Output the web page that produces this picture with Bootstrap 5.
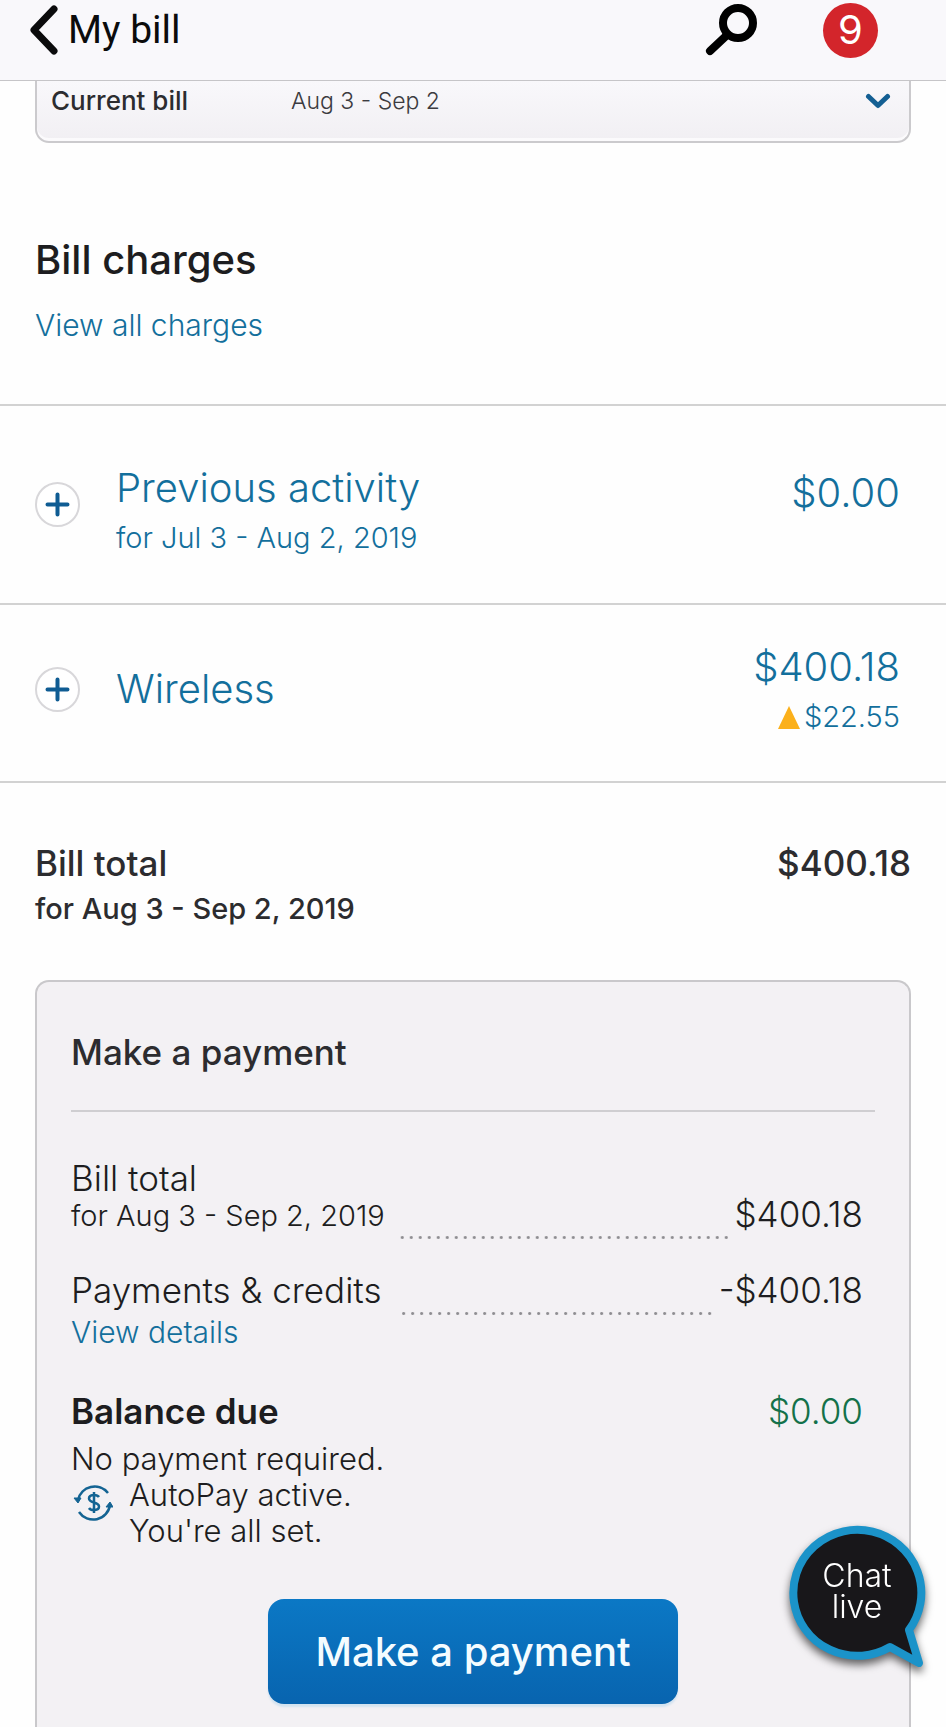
<!DOCTYPE html>
<html lang="en">
<head>
<meta charset="utf-8">
<meta name="viewport" content="width=device-width, initial-scale=1">
<title>My bill</title>
<link href="https://cdn.jsdelivr.net/npm/bootstrap@5.3.0/dist/css/bootstrap.min.css" rel="stylesheet">
<style>
  :root { --link: #136f9c; --rule: #d2d2d2; --panel: #f3f1f4; }
  body { font-family: "Inter", "Liberation Sans", sans-serif; color: #1d1d20; background: #fefefe; }
  a { color: var(--link); text-decoration: none; }
  .px-page { padding-left: 35px; padding-right: 35px; }
  .t-26 { font-size: 26px; line-height: 36px; }
  .t-29 { font-size: 29px; line-height: 36px; }
  .t-30 { font-size: 30px; line-height: 36px; }
  .t-35 { font-size: 35px; line-height: 40px; }
  .t-40 { font-size: 40px; line-height: 48px; }
  .w-thin { font-weight: 300; }
  .w-mid { font-weight: 500; }
  .ink { color: #2c2c2f; }
  .paid { color: #13714a; }
  .topbar { height: 81px; padding: 0 68px 20px 28px; background: #f9f8fb; border-bottom: 1px solid #c6c5c8; }
  .topbar-title { font-family: Roboto, sans-serif; font-size: 39px; line-height: 48px; color: #0b0b0c; }
  .search { margin-right: 51px; }
  .count { width: 55px; height: 55px; background: #d3252b; font-size: 40px; }
  .period { padding: 2px 18px 22px 14px; border: 2px solid #cbcacd; border-top: 0; border-radius: 0 0 14px 14px;
    background: linear-gradient(#f9f8fb, #f1eff3); box-shadow: inset 0 -3px 0 #fbfafc; }
  .period label { width: 240px; }
  .period select { appearance: none; background: none; border: 0; padding: 0; font-size: 23px; line-height: 36px; color: #3c3b40; }
  .section-title { margin-top: 93px; margin-bottom: 23px; }
  .view-all { margin-bottom: 61px; }
  .charge { border-top: 2px solid var(--rule); padding: 0 46px 0 35px; color: var(--link); gap: 36px; }
  .charge-tall { height: 199px; }
  .charge-tall .charge-name { padding-top: 11px; }
  .charge-tall .charge-amount { padding-top: 63px; }
  .charge-short { height: 178px; padding-bottom: 8px; }
  .expander { width: 45px; height: 45px; padding: 0; background: #fff; border: 2px solid #d8d7da; border-radius: 50%; }
  .total { border-top: 2px solid var(--rule); padding-top: 60px; padding-bottom: 53px; }
  .panel { background: var(--panel); border: 2px solid #c9c8cb; border-bottom: 0; border-radius: 14px 14px 0 0;
    margin: 0 35px; padding: 50px 34px 20px; }
  .panel-title { padding-bottom: 38px; border-bottom: 2px solid #cfced1; margin-bottom: 46px; }
  .line { padding-right: 12px; }
  .line-credits { margin-top: 36px; }
  .line-balance { margin-top: 41px; margin-bottom: 10px; }
  .dots { height: 3px; margin: 0 4px -5px 10px;
    background: radial-gradient(circle at 50% 50%, #8f8e92 1px, transparent 2px) right center / 9px 3px repeat-x; }
  .line-credits .dots { margin-left: 20px; }
  .status { font-size: 31px; line-height: 36px; }
  .status-icon { margin-top: 6px; }
  .pay-row { margin-top: 50px; }
  .pay { border-radius: 16px; padding: 28px 47px; color: #f4fcff; border: 0; background: linear-gradient(#0b78c5, #0864af);
    box-shadow: 0 3px 2px #d3e3f0; font-size: 40px; line-height: 49px; }
  .pay:hover { color: #fff; background: #0864af; }
  .chat { right: 14px; bottom: 54px; width: 146px; height: 150px; padding: 0 4px 14px 0; border: 0; background: none; color: #fff; }
  .chat svg { inset: 0; }
  .chat span { font-size: 32px; line-height: 31px; }
</style>
</head>
<body class="min-vh-100 d-flex flex-column">

<header class="topbar d-flex align-items-center">
  <a href="#" class="d-flex align-items-center gap-2 me-auto" aria-label="Back">
    <svg width="32" height="50" viewBox="0 0 32 50" fill="none" stroke="#0b0b0c" stroke-width="7" stroke-linecap="round" stroke-linejoin="round"><path d="M26 4 L6 25 L26 46"/></svg>
    <span class="topbar-title">My bill</span>
  </a>
  <button type="button" class="search btn p-0 border-0 d-flex" aria-label="Search">
    <svg width="74" height="54" viewBox="0 0 74 54" fill="none" stroke="#000" stroke-linecap="round"><circle cx="40" cy="20" r="15" stroke-width="8"/><path d="M28 33 L12 48" stroke-width="8"/></svg>
  </button>
  <button type="button" class="count btn p-0 border-0 rounded-circle text-white d-flex align-items-center justify-content-center fw-normal" aria-label="9 notifications">9</button>
</header>

<main class="flex-grow-1 d-flex flex-column">
  <div class="px-page">
    <div class="period d-flex align-items-center">
      <label for="period" class="t-26 w-mid ink">Current bill</label>
      <select id="period" class="flex-grow-1 w-thin"><option>Aug 3 - Sep 2</option></select>
      <svg class="pe-none" width="26" height="17" viewBox="0 0 26 17" fill="none" stroke="#145f93" stroke-width="5" stroke-linecap="round" stroke-linejoin="round"><path d="M3.500 3.500 L13 12.500 L22.500 3.500"/></svg>
    </div>
    <h1 class="section-title t-40 w-mid">Bill charges</h1>
    <div class="view-all t-30 w-thin"><a href="#">View all charges</a></div>
  </div>

  <section class="charge charge-tall d-flex align-items-center">
    <button type="button" class="expander d-flex align-items-center justify-content-center" aria-label="Expand previous activity">
      <svg width="25" height="25" viewBox="0 0 25 25" stroke="#0f5c93" stroke-width="4" stroke-linecap="round"><path d="M12.500 2.500 V22.500 M2.500 12.500 H22.500"/></svg>
    </button>
    <div class="charge-name flex-grow-1 w-thin">
      <a href="#" class="d-block t-40">Previous activity</a>
      <div class="t-29 pt-2">for Jul 3 - Aug 2, 2019</div>
    </div>
    <div class="charge-amount t-40 w-thin align-self-start">$0.00</div>
  </section>

  <section class="charge charge-short d-flex align-items-center">
    <button type="button" class="expander d-flex align-items-center justify-content-center" aria-label="Expand wireless">
      <svg width="25" height="25" viewBox="0 0 25 25" stroke="#0f5c93" stroke-width="4" stroke-linecap="round"><path d="M12.500 2.500 V22.500 M2.500 12.500 H22.500"/></svg>
    </button>
    <a href="#" class="flex-grow-1 t-40 w-thin">Wireless</a>
    <div class="w-thin text-end">
      <div class="t-40">$400.18</div>
      <div class="t-29 d-flex align-items-center justify-content-end gap-1 pt-2">
        <svg width="22" height="23" viewBox="0 0 22 23" fill="#fbb01b"><path d="M11 0 L22 23 H0 Z"/></svg>$22.55</div>
    </div>
  </section>

  <section class="total px-page d-flex justify-content-between w-mid ink">
    <div>
      <div class="t-35">Bill total</div>
      <div class="t-29 pt-2">for Aug 3 - Sep 2, 2019</div>
    </div>
    <div class="t-35">$400.18</div>
  </section>

  <section class="panel flex-grow-1">
    <h2 class="panel-title t-35 w-mid ink">Make a payment</h2>

    <div class="line d-flex align-items-end w-thin">
      <div>
        <div class="t-35">Bill total</div>
        <div class="t-29">for Aug 3 - Sep 2, 2019</div>
      </div>
      <div class="dots flex-grow-1"></div>
      <div class="t-35">$400.18</div>
    </div>

    <div class="line line-credits d-flex align-items-end w-thin">
      <div class="t-35">Payments &amp; credits</div>
      <div class="dots flex-grow-1"></div>
      <div class="t-35">-$400.18</div>
    </div>
    <div class="t-30 w-thin pt-1"><a href="#">View details</a></div>

    <div class="line line-balance d-flex justify-content-between">
      <div class="t-35 fw-semibold">Balance due</div>
      <div class="t-35 w-thin paid">$0.00</div>
    </div>
    <div class="status w-thin">
      <div>No payment required.</div>
      <div class="d-flex gap-3">
        <svg class="status-icon" width="42" height="42" viewBox="-4 0 42 42" fill="none" stroke="#146493" stroke-width="2.500"><path d="M3 17 A17 17 0 0 1 33 10"/><path d="M35 22 A17 17 0 0 1 4 29"/><path d="M-1 15 H6 L3 20 Z M31 24 H38 L35 19 Z" fill="#146493" stroke-width="1"/><path d="M24 14 C22 11 14 11 14 15.500 C14 20.500 24 18.500 24 23.500 C24 28 16 28 14 25 M19 9 V30"/></svg>
        <div>AutoPay active.<br>You're all set.</div>
      </div>
    </div>
    <div class="pay-row text-center"><button type="button" class="btn pay w-mid">Make a payment</button></div>
  </section>
</main>

<button type="button" class="chat position-fixed w-thin">
  <svg class="position-absolute overflow-visible" width="146" height="150" viewBox="0 0 146 150"><path d="M123 107 A64 63 0 1 0 104 124 L133 140 Z" fill="#18171a" stroke="#1b93c9" stroke-width="8" stroke-linejoin="round" style="filter:drop-shadow(0 5px 4px #0009)"/></svg>
  <span class="position-relative d-block">Chat<br>live</span>
</button>

<script src="https://cdn.jsdelivr.net/npm/bootstrap@5.3.0/dist/js/bootstrap.bundle.min.js"></script>
</body>
</html>
